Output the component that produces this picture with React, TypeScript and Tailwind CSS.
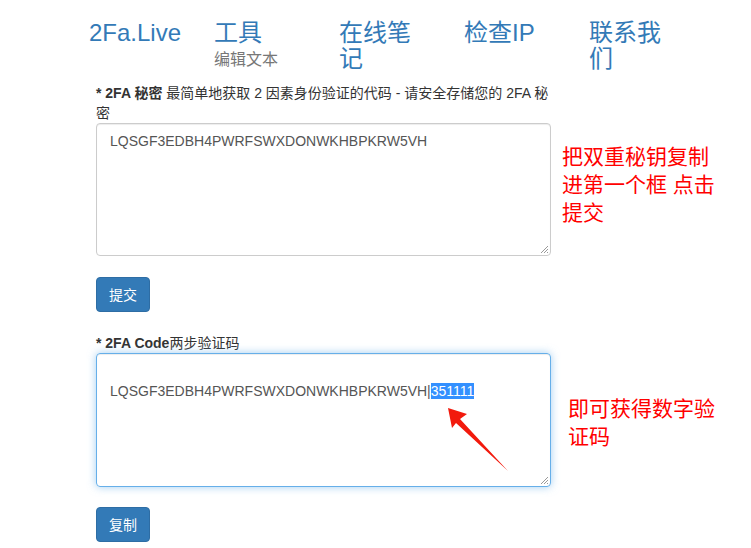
const font = { fontFamily: '"Liberation Sans", "Noto Sans CJK SC", sans-serif' };

function NavItem({ title, sub }: { title: string; sub?: string }) {
  return (
    <div className="w-[125px] shrink-0">
      <div className="max-w-[84px] text-[24px] leading-[26px] text-[#337ab7]">{title}</div>
      {sub && <div className="mt-[3px] text-[16px] leading-[22px] text-[#777]">{sub}</div>}
    </div>
  );
}

function Grip() {
  return (
    <svg className="absolute bottom-[1px] right-[1px]" width="9" height="9" viewBox="0 0 9 9">
      <path d="M8 1 L1 8 M8 4 L4 8 M8 7 L7 8" stroke="#999" strokeWidth="1" />
    </svg>
  );
}

function Button({ label }: { label: string }) {
  return (
    <button
      type="button"
      className="h-[35px] w-[54px] rounded-[4px] border border-[#2e6da4] bg-[#337ab7] text-[14px] leading-[20px] text-white"
    >
      {label}
    </button>
  );
}

export default function App() {
  return (
    <div className="relative h-[548px] w-[751px] overflow-hidden bg-white text-[14px] text-[#333]" style={font}>
      <nav className="flex pl-[89px] pt-[20px]">
        <NavItem title="2Fa.Live" />
        <NavItem title="工具" sub="编辑文本" />
        <NavItem title="在线笔记" />
        <NavItem title="检查IP" />
        <NavItem title="联系我们" />
      </nav>

      <div className="ml-[96px] mt-[11px]">
        <div className="w-[455px] leading-[20px]">
          <b>* 2FA 秘密</b> 最简单地获取 2 因素身份验证的代码 - 请安全存储您的 2FA 秘密
        </div>
        <div className="flex">
          <div className="relative h-[133px] w-[455px] shrink-0 rounded-[4px] border border-[#ccc] px-[13px] py-[7px] leading-[20px] text-[#555] shadow-[inset_0_1px_1px_rgba(0,0,0,0.075)]">
            LQSGF3EDBH4PWRFSWXDONWKHBPKRW5VH
            <Grip />
          </div>
          <div className="ml-[11px] mt-[20px] text-[21px] leading-[28px] text-[#ff0000]">
            把双重秘钥复制
            <br />
            进第一个框 点击
            <br />
            提交
          </div>
        </div>

        <div className="mt-[21px]">
          <Button label="提交" />
        </div>

        <div className="mt-[21px] leading-[20px]">
          <b>* 2FA Code</b>两步验证码
        </div>
        <div className="flex">
          <div className="relative h-[134px] w-[455px] shrink-0 rounded-[4px] border border-[#66afe9] px-[13px] py-[7px] leading-[20px] text-[#555] shadow-[inset_0_1px_1px_rgba(0,0,0,0.075),0_0_8px_rgba(102,175,233,0.6)]">
            <br />
            LQSGF3EDBH4PWRFSWXDONWKHBPKRW5VH|<span className="bg-[#3390ff] text-white">351111</span>
            <Grip />
          </div>
          <div className="ml-[17px] mt-[42px] text-[21px] leading-[28px] text-[#ff0000]">
            即可获得数字验
            <br />
            证码
          </div>
        </div>

        <div className="mt-[20px]">
          <Button label="复制" />
        </div>
      </div>

      <svg className="pointer-events-none absolute left-0 top-0" width="751" height="548">
        <polygon points="448,408 467,414 460,419 508,471 456,423 452,428" fill="#f21a0d" />
      </svg>
    </div>
  );
}
